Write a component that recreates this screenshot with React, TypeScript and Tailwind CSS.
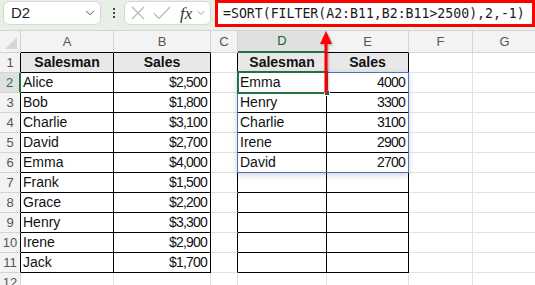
import { ChevronDown } from 'lucide-react';

const colLetters = ['A', 'B', 'C', 'D', 'E', 'F', 'G'];

const source: [string, string][] = [
  ['Alice', '$2,500'],
  ['Bob', '$1,800'],
  ['Charlie', '$3,100'],
  ['David', '$2,700'],
  ['Emma', '$4,000'],
  ['Frank', '$1,500'],
  ['Grace', '$2,200'],
  ['Henry', '$3,300'],
  ['Irene', '$2,900'],
  ['Jack', '$1,700'],
];

const sorted: [string, string][] = [
  ['Emma', '4000'],
  ['Henry', '3300'],
  ['Charlie', '3100'],
  ['Irene', '2900'],
  ['David', '2700'],
];

function Cell({ text, right, bold, dark, black, center }: { text?: string; right?: boolean; bold?: boolean; dark?: boolean; black?: boolean; center?: boolean }) {
  return (
    <div
      className={`h-full border-r border-b flex items-center overflow-hidden whitespace-nowrap text-[14px] text-[#111] ${
        black ? 'border-black' : 'border-[#e1e1e1]'
      } ${dark ? 'bg-[#e8e8e8]' : 'bg-white'} ${bold ? 'font-bold' : ''} ${
        center ? 'justify-center' : right ? 'justify-end pr-[3px] tracking-[-0.8px]' : 'pl-[2px]'
      }`}
    >
      {text}
    </div>
  );
}

export default function App() {
  const rows = Array.from({ length: 12 }, (_, i) => i + 1);

  return (
    <div className="relative w-[535px] h-[285px] overflow-hidden bg-white font-['Liberation_Sans',Arial,sans-serif]">
      {/* formula bar */}
      <div className="h-[31px] bg-[#e7f0e4] border-b border-[#d4d4d4] flex items-start pl-[3px]">
        <div className="mt-[1px] w-[98px] h-[24px] rounded-[6px] bg-white border border-[#d6d6d6] flex items-center justify-between pl-[7px] pr-[3px]">
          <span className="text-[15px] text-[#1f1f1f]">D2</span>
          <ChevronDown className="w-[14px] h-[14px] text-[#444]" strokeWidth={1.6} />
        </div>
        <div className="mt-[8px] ml-[12px] flex flex-col gap-[2px]">
          <span className="w-[2px] h-[2px] bg-[#444]" />
          <span className="w-[2px] h-[2px] bg-[#444]" />
          <span className="w-[2px] h-[2px] bg-[#444]" />
        </div>
        <div className="mt-[1px] ml-[9px] w-[87px] h-[24px] rounded-[6px] bg-white border border-[#d6d6d6] flex items-center pl-[5px]">
          <svg width="16" height="16" viewBox="0 0 16 16" className="text-[#b5b5b5]">
            <path d="M2 2 L14 14 M14 2 L2 14" stroke="currentColor" strokeWidth="1.1" fill="none" />
          </svg>
          <svg width="18" height="16" viewBox="0 0 18 16" className="ml-[7px] text-[#b5b5b5]">
            <path d="M1 8.5 L6 13.5 L17 2" stroke="currentColor" strokeWidth="1.1" fill="none" />
          </svg>
          <span className="ml-[9px] font-['Liberation_Serif',serif] italic text-[17px] leading-none text-[#333]">fx</span>
          <ChevronDown className="ml-[3px] w-[12px] h-[12px] text-[#888]" strokeWidth={1.6} />
        </div>
        <div className="ml-[4px] flex-1 h-[27px] border-[3px] border-[#ff0000] bg-white flex items-center pl-[5px] font-['DejaVu_Sans_Mono',monospace] text-[13.2px] text-[#1a1a1a] whitespace-nowrap">
          =SORT(FILTER(A2:B11,B2:B11&gt;2500),2,-1)
        </div>
      </div>

      {/* grid */}
      <div className="grid grid-cols-[21px_93px_97px_27px_89px_82px_64px_64px] grid-rows-[22px_repeat(12,20px)]">
        {/* column headers */}
        <div className="border-r border-b border-[#d0d0d0] bg-[#f3f3f3] flex items-end justify-end p-[3px]">
          <div className="w-0 h-0 border-l-[12px] border-l-transparent border-b-[12px] border-b-[#d6d6d6]" />
        </div>
        {colLetters.map((c) => {
          const sel = c === 'D';
          const black = c === 'A' || c === 'B' || c === 'E';
          return (
            <div
              key={c}
              className={`border-r border-[#d4d4d4] flex items-center justify-center text-[13px] ${
                sel
                  ? 'bg-[#dfe0df] text-[#1e5e37] border-b-2 border-b-[#217346]'
                  : black
                  ? 'bg-[#f3f3f3] text-[#555] border-b border-b-black'
                  : 'bg-[#f3f3f3] text-[#555] border-b border-b-[#d4d4d4]'
              }`}
            >
              {c}
            </div>
          );
        })}

        {rows.map((r) => {
          const inTable = r <= 11;
          const sel = r === 2;
          const left = source[r - 2];
          const right = sorted[r - 2];
          return [
            <div
              key={`h${r}`}
              className={`border-b border-b-[#d4d4d4] flex items-center justify-center text-[13px] ${
                sel
                  ? 'bg-[#dfe0df] text-[#217346] border-r-2 border-r-[#217346]'
                  : inTable
                  ? 'bg-[#f3f3f3] text-[#555] border-r border-r-black'
                  : 'bg-[#f3f3f3] text-[#555] border-r border-r-[#d4d4d4]'
              }`}
            >
              {r}
            </div>,
            r === 1 ? (
              <Cell key={`a${r}`} text="Salesman" bold dark black center />
            ) : (
              <Cell key={`a${r}`} text={left ? left[0] : ''} black={inTable} />
            ),
            r === 1 ? (
              <Cell key={`b${r}`} text="Sales" bold dark black center />
            ) : (
              <Cell key={`b${r}`} text={left ? left[1] : ''} right black={inTable} />
            ),
            <div
              key={`c${r}`}
              className={`border-b border-[#e1e1e1] border-r ${inTable ? 'border-r-black' : ''}`}
            />,
            r === 1 ? (
              <Cell key={`d${r}`} text="Salesman" bold dark black center />
            ) : (
              <Cell key={`d${r}`} text={right ? right[0] : ''} black={inTable} />
            ),
            r === 1 ? (
              <Cell key={`e${r}`} text="Sales" bold dark black center />
            ) : (
              <Cell key={`e${r}`} text={right ? right[1] : ''} right black={inTable} />
            ),
            <Cell key={`f${r}`} />,
            <Cell key={`g${r}`} />,
          ];
        })}
      </div>

      {/* spill range outline */}
      <div className="absolute left-[237px] top-[72px] w-[172px] h-[101px] border border-[#4472c4] shadow-[0_2px_6px_rgba(0,0,0,0.18)] pointer-events-none" />
      {/* active cell */}
      <div className="absolute left-[237px] top-[71px] w-[91px] h-[23px] border-2 border-[#217346] pointer-events-none" />
      <div className="absolute left-[324px] top-[90px] w-[6px] h-[6px] bg-[#217346] border border-white pointer-events-none" />

      {/* red arrow */}
      <svg
        className="absolute left-[316px] top-[28px] pointer-events-none drop-shadow-[1px_1px_1px_rgba(0,0,0,0.3)]"
        width="20"
        height="68"
        viewBox="0 0 20 68"
      >
        <path d="M10 3 L16 16 L4 16 Z" fill="#ff0000" />
        <rect x="8.5" y="15" width="3" height="50" fill="#ff0000" />
      </svg>
    </div>
  );
}
